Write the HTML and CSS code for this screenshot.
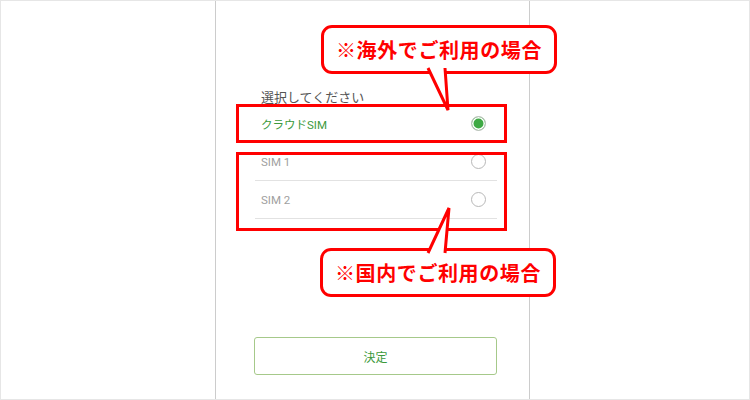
FILE: index.html
```html
<!DOCTYPE html>
<html>

<head>
  <title>SIM選択</title>
  <link rel="stylesheet" href="styles.css">
</head>

<body>
  <div id="frame">
    <div id="phone">
      <p class="prompt">選択してください</p>
      <ul class="sim-list">
        <li class="sim-item selected"><span>クラウドSIM</span><i class="radio"></i></li>
        <li class="sim-item"><span>SIM 1</span><i class="radio"></i></li>
        <li class="sim-item"><span>SIM 2</span><i class="radio"></i></li>
      </ul>
      <button type="button" class="decide">決定</button>
    </div>

    <!-- annotations -->
    <div class="mark mark-cloud"></div>
    <div class="mark mark-local"></div>

    <div class="callout callout-top">※海外でご利用の場合</div>
    <svg class="tail tail-top" width="40" height="46" viewBox="0 0 40 46">
      <path d="M8 0 L28 42 L25 0" fill="#fff" stroke="#f00" stroke-width="3" stroke-linejoin="miter"/>
    </svg>

    <div class="callout callout-bottom">※国内でご利用の場合</div>
    <svg class="tail tail-bottom" width="40" height="50" viewBox="0 0 40 50">
      <path d="M8 48 L29 3 L25 48" fill="#fff" stroke="#f00" stroke-width="3" stroke-linejoin="miter"/>
    </svg>
  </div>
</body>

</html>
```

FILE: styles.css
```css
* {
  box-sizing: border-box;
}

body {
  margin: 0;
  font-family: "Noto Sans CJK JP", "Noto Sans", sans-serif;
  background-color: #fff;
}

#frame {
  position: relative;
  width: 750px;
  height: 400px;
  border: 1px solid #e6e6e6;
  padding-left: 214px; /* column starts at x=215 */
  overflow: hidden;
}

#phone {
  width: 315px;
  height: 100%;
  border-left: 1px solid #cccccc;
  border-right: 1px solid #cccccc;
  padding: 87px 32px 0 39px;
}

.prompt {
  margin: 0;
  padding-left: 6px;
  font-size: 13px;
  line-height: 17px;
  color: #555;
}

.sim-list {
  list-style: none;
  margin: 0;
  padding: 0;
}

.sim-item {
  display: flex;
  align-items: center;
  justify-content: space-between;
  height: 38px;
  padding: 0 11px 0 6px;
  border-bottom: 1px solid #e2e2e2;
  font-family: Roboto, "Noto Sans CJK JP", sans-serif;
  font-size: 11.5px;
  color: #a0a0a0;
}

.radio {
  width: 15px;
  height: 15px;
  border: 1px solid #b8b8b8;
  border-radius: 50%;
}

.sim-item.selected {
  color: #3c9a3c;
}

.sim-item.selected .radio {
  border-color: #c4c4c4;
  background-color: #3eaa44;
  box-shadow: inset 0 0 0 1.5px #fff;
}

.decide {
  display: block;
  width: 243px;
  height: 38px;
  margin: 118px 0 0 -1px;
  background-color: #fff;
  border: 1px solid #a6c98a;
  border-radius: 3px;
  font-family: inherit;
  font-size: 12px;
  color: #3c9a3c;
}

/* red annotations */
.mark {
  position: absolute;
  left: 235px;
  width: 271px;
  border: 3px solid #f00;
}

.mark-cloud {
  top: 103px;
  height: 39px;
}

.mark-local {
  top: 151px;
  height: 79px;
}

.callout {
  position: absolute;
  width: 236px;
  height: 49px;
  border: 3px solid #f00;
  border-radius: 11px;
  background-color: #fff;
  display: flex;
  align-items: center;
  justify-content: center;
  font-size: 20px;
  font-weight: 700;
  letter-spacing: 0.6px;
  color: #f00;
}

.callout-top {
  left: 320px;
  top: 24px;
}

.callout-bottom {
  left: 319px;
  top: 247px;
}

.tail {
  position: absolute;
  overflow: visible;
}

.tail-top {
  left: 419px;
  top: 67px;
}

.tail-bottom {
  left: 419px;
  top: 204px;
}
```
